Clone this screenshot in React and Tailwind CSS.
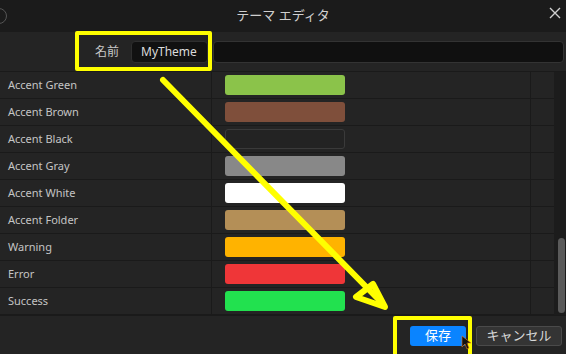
import React from "react";

const colors = [
  { name: "Accent Green", bg: "bg-[#8bc34a]" },
  { name: "Accent Brown", bg: "bg-[#7f4f3b]" },
  { name: "Accent Black", bg: "bg-[#232323] border border-[#3a3a3a]" },
  { name: "Accent Gray", bg: "bg-[#888888]" },
  { name: "Accent White", bg: "bg-white" },
  { name: "Accent Folder", bg: "bg-[#b48f57]" },
  { name: "Warning", bg: "bg-[#ffb300]" },
  { name: "Error", bg: "bg-[#ef3638]" },
  { name: "Success", bg: "bg-[#22e14f]" },
];

function Row({ name, bg }) {
  return (
    <div className="grid grid-cols-[212px_319px_23px] h-[27px] border-b border-[#1a1a1a]">
      <div className="flex items-center pl-2 text-[11px] text-[#c4c4c4] border-r border-[#1a1a1a]">{name}</div>
      <div className="flex items-center pl-[13px] border-r border-[#1a1a1a]">
        <div className={"w-[120px] h-[20px] rounded-[3px] " + bg}></div>
      </div>
      <div></div>
    </div>
  );
}

export default function App() {
  return (
    <div className="relative w-[566px] h-[354px] overflow-hidden bg-[#242424] flex flex-col" style={{ fontFamily: '"Noto Sans", "Noto Sans CJK JP", sans-serif' }}>
      <div className="relative h-[32px] bg-[#1b1b1b] flex items-center justify-center shrink-0">
        <div className="absolute -left-[9px] top-[8px] w-[16px] h-[16px] rounded-full border border-[#555]"></div>
        <span className="text-[13px] text-[#cfcfcf]">テーマ エディタ</span>
        <svg className="absolute right-[5px] top-[7px]" width="12" height="12" viewBox="0 0 12 12">
          <path d="M1 1L11 11M11 1L1 11" stroke="#d0d0d0" strokeWidth="1.4" />
        </svg>
      </div>
      <div className="h-[40px] shrink-0 flex items-center border-b border-[#1a1a1a] pl-[95px] pr-[2px]">
        <span className="text-[12px] text-[#c8c8c8] w-[36px]">名前</span>
        <div className="w-[77px] h-[22px] rounded-[4px] bg-[#111] border border-[#2e2e2e] flex items-center pl-[9px] text-[12px] text-[#dcdcdc]">MyTheme</div>
        <div className="ml-[5px] flex-1 h-[22px] rounded-[4px] bg-[#101010] border border-[#333]"></div>
      </div>
      <div className="flex h-[243px] shrink-0">
        <div className="w-[554px]">
          {colors.map((c) => (
            <Row key={c.name} name={c.name} bg={c.bg} />
          ))}
        </div>
        <div className="flex-1 bg-[#1c1c1c] relative">
          <div className="absolute left-[4px] top-[166px] w-[7px] h-[75px] rounded-full bg-[#5a5a5a]"></div>
        </div>
      </div>
      <div className="flex-1 border-t border-[#1a1a1a] flex items-center justify-end pr-[4px] gap-[10px] pt-[1px]">
        <button className="w-[56px] h-[20px] rounded-[3px] bg-[#0a84ff] text-white text-[13px] leading-none">保存</button>
        <button className="w-[86px] h-[20px] rounded-[3px] bg-[#343434] border border-[#4a4a4a] text-[#d8d8d8] text-[13px] leading-none">キャンセル</button>
      </div>

      <div className="absolute left-[75px] top-[31px] w-[137px] h-[40px] border-[4px] border-[#ffff00] rounded-[2px]"></div>
      <div className="absolute left-[393px] top-[316px] w-[79px] h-[42px] border-[4px] border-[#ffff00] rounded-[2px]"></div>
      <svg className="absolute left-0 top-0 pointer-events-none" width="566" height="354">
        <line x1="163" y1="80" x2="382" y2="303" stroke="#ffff00" strokeWidth="6" strokeLinecap="round" />
        <path d="M373 284L356 297L385 307Z" fill="none" stroke="#ffff00" strokeWidth="6" strokeLinejoin="round" />
        <path d="M462 336L462 347L465 344L467 349L469 348L467 343L471 343Z" fill="#111" stroke="#e87a1e" strokeWidth="0.6" />
      </svg>
    </div>
  );
}
